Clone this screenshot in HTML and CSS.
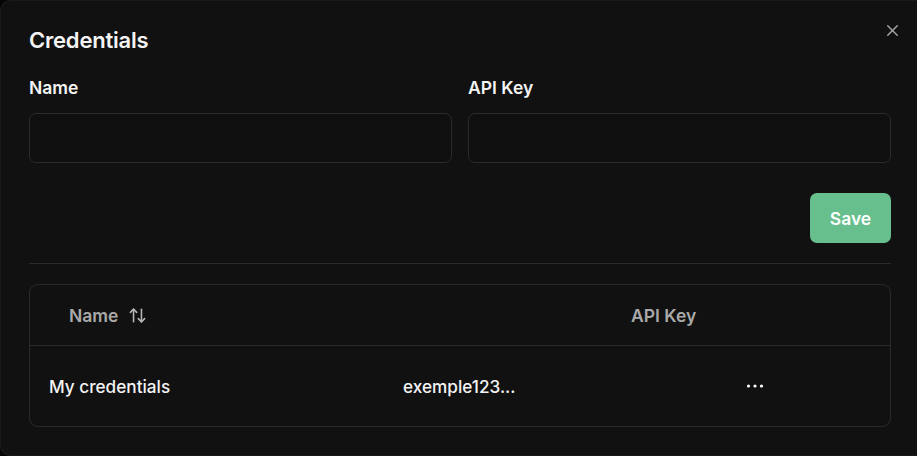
FILE: index.html
```html
<!DOCTYPE html>
<html lang="en">
<head>
<meta charset="utf-8">
<title>Credentials</title>
<link rel="stylesheet" href="styles.css">
</head>
<body>
<div class="dialog">
  <button class="close" aria-label="Close">
    <svg width="19" height="19" viewBox="0 0 24 24" fill="none" stroke="currentColor" stroke-width="1.8" stroke-linecap="round" stroke-linejoin="round"><path d="M18 6 6 18"/><path d="m6 6 12 12"/></svg>
  </button>
  <h2 class="title">Credentials</h2>
  <div class="fields">
    <label class="field">
      <span class="label">Name</span>
      <input class="input" type="text">
    </label>
    <label class="field">
      <span class="label">API Key</span>
      <input class="input" type="text">
    </label>
  </div>
  <div class="actions">
    <button class="save">Save</button>
  </div>
  <hr class="divider">
  <div class="table">
    <div class="thead">
      <div class="th th-name">Name
        <svg class="sort" width="19" height="19" viewBox="0 0 24 24" fill="none" stroke="currentColor" stroke-width="2" stroke-linecap="round" stroke-linejoin="round"><path d="m21 16-4 4-4-4"/><path d="M17 20V4"/><path d="m3 8 4-4 4 4"/><path d="M7 4v16"/></svg>
      </div>
      <div class="th th-key">API Key</div>
    </div>
    <div class="trow">
      <div class="td td-name">My credentials</div>
      <div class="td td-key">exemple123...</div>
      <div class="td td-act">
        <svg width="18" height="18" viewBox="0 0 18 18" fill="currentColor"><circle cx="2.5" cy="9" r="1.6"/><circle cx="9" cy="9" r="1.6"/><circle cx="15.5" cy="9" r="1.6"/></svg>
      </div>
    </div>
  </div>
</div>
</body>
</html>
```

FILE: styles.css
```css
* { box-sizing: border-box; }
html, body { margin: 0; padding: 0; }
body {
  background: #050505;
  font-family: Inter, "Noto Sans", sans-serif;
  color: #f4f4f4;
  overflow: hidden;
}
.dialog {
  position: relative;
  width: 917px;
  height: 456px;
  background: #111111;
  border: 1px solid #1a1a1a;
  border-right: none;
  border-radius: 10px 0 0 10px;
  padding: 24px 26px 0 28px;
}
.close {
  position: absolute;
  top: 20px;
  right: 15px;
  background: none;
  border: none;
  padding: 0;
  color: #a6a6a6;
  display: flex;
}
.title {
  margin: 0;
  font-size: 22px;
  line-height: 30px;
  font-weight: 600;
  letter-spacing: -0.2px;
}
.fields {
  margin-top: 21px;
  display: grid;
  grid-template-columns: 1fr 1fr;
  gap: 16px;
}
.field { display: flex; flex-direction: column; gap: 13px; }
.label {
  font-size: 17.5px;
  line-height: 24px;
  font-weight: 600;
}
.input {
  height: 50px;
  background: #0f0f0f;
  border: 1px solid #2b2b2b;
  border-radius: 7px;
  outline: none;
  color: #f4f4f4;
  font: inherit;
  padding: 0 14px;
}
.actions {
  margin-top: 30px;
  display: flex;
  justify-content: flex-end;
}
.save {
  width: 81px;
  height: 50px;
  border: none;
  border-radius: 7px;
  background: #67bf8e;
  color: #ffffff;
  font-family: inherit;
  font-size: 17.5px;
  font-weight: 600;
}
.divider {
  margin: 20px 0 0;
  border: none;
  border-top: 1px solid #2a2a2a;
}
.table {
  margin-top: 20px;
  border: 1px solid #2a2a2a;
  border-radius: 9px;
}
.thead {
  height: 61px;
  display: flex;
  align-items: center;
  border-bottom: 1px solid #2a2a2a;
  color: #a9a9a9;
  font-size: 17.5px;
  font-weight: 600;
}
.th-name {
  display: flex;
  align-items: center;
  gap: 10px;
  padding-left: 39px;
  width: 601px;
}
.sort { color: #b5b5b5; }
.trow {
  height: 80px;
  display: grid;
  grid-template-columns: 354px 344px 1fr;
  align-items: center;
  font-size: 17.2px;
  font-weight: 500;
}
.td { padding-left: 19px; }
.td-act { display: flex; padding-left: 18px; color: #ffffff; }
```
